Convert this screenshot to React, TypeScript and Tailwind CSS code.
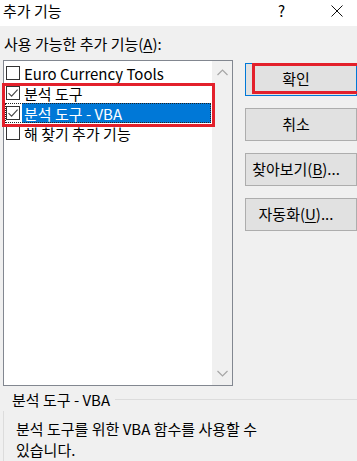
import React from "react";

const font = { fontFamily: '"Noto Sans CJK KR", "Noto Sans", sans-serif' };

function Check({ checked }: { checked: boolean }) {
  return (
    <div className="w-[14px] h-[14px] border border-[#333333] bg-white flex items-center justify-center shrink-0">
      {checked && (
        <svg width="12" height="12" viewBox="0 0 12 12">
          <path d="M1.5 6.2 L4.6 9.2 L10.6 2.6" fill="none" stroke="#444444" strokeWidth="1.1" />
        </svg>
      )}
    </div>
  );
}

function Item({ label, checked, selected }: { label: string; checked: boolean; selected?: boolean }) {
  return (
    <div className="relative h-[20px] flex items-center pl-[2px]">
      <Check checked={checked} />
      <div
        className={
          "ml-[2px] h-[20px] flex-1 flex items-center pl-[2px] text-[15px] leading-none " +
          (selected ? "bg-[#0078d7] text-white" : "text-black")
        }
      >
        {label}
      </div>
      {selected && (
        <div className="absolute left-[1px] right-0 top-0 bottom-0 border border-dotted border-[#222222] pointer-events-none" />
      )}
    </div>
  );
}

function Btn({ children, primary }: { children: React.ReactNode; primary?: boolean }) {
  return (
    <div
      className={
        "h-[33px] w-[112px] flex items-center justify-center pr-[10px] text-[15px] text-black bg-[#e1e1e1] border " +
        (primary ? "border-[#0078d7]" : "border-[#adadad]")
      }
    >
      {children}
    </div>
  );
}

export default function App() {
  return (
    <div className="relative w-[357px] h-[461px] overflow-hidden bg-[#f0f0f0] text-black" style={font}>
      {/* Title bar */}
      <div className="h-[26px] bg-white flex items-center pl-[3px] pb-[5px]">
        <span className="text-[15px] leading-none">추가 기능</span>
        <span className="ml-auto text-[15px] leading-none mr-[46px]">?</span>
        <svg width="12" height="12" viewBox="0 0 12 12" className="mr-[14px]">
          <path d="M0.5 0.5 L11.5 11.5 M11.5 0.5 L0.5 11.5" stroke="#111" strokeWidth="1" />
        </svg>
      </div>

      {/* Label */}
      <div className="h-[34px] flex items-center pl-[4px] text-[15px] leading-none">
        사용 가능한 추가 기능(<span className="underline underline-offset-2">A</span>):
      </div>

      {/* Main row */}
      <div className="flex">
        <div className="ml-[3px] w-[232px] h-[326px] border border-[#828790] bg-white flex">
          <div className="flex-1 pt-[2px] pr-[1px]">
            <Item label="Euro Currency Tools" checked={false} />
            <Item label="분석 도구" checked={true} />
            <Item label="분석 도구 - VBA" checked={true} selected />
            <Item label="해 찾기 추가 기능" checked={false} />
          </div>
          <div className="w-[20px] bg-[#f0f0f0] flex flex-col justify-between items-center py-[8px]">
            <svg width="11" height="7" viewBox="0 0 11 7">
              <path d="M0.5 6 L5.5 1 L10.5 6" fill="none" stroke="#a6a6a6" strokeWidth="1.2" />
            </svg>
            <svg width="11" height="7" viewBox="0 0 11 7">
              <path d="M0.5 1 L5.5 6 L10.5 1" fill="none" stroke="#a6a6a6" strokeWidth="1.2" />
            </svg>
          </div>
        </div>
        <div className="ml-[12px] flex flex-col gap-[12px] mt-[3px]">
          <Btn primary>확인</Btn>
          <Btn>취소</Btn>
          <Btn>
            찾아보기(<span className="underline underline-offset-2">B</span>)...
          </Btn>
          <Btn>
            자동화(<span className="underline underline-offset-2">U</span>)...
          </Btn>
        </div>
      </div>

      {/* Group box */}
      <div className="mt-[5px] flex items-center h-[16px]">
        <span className="ml-[12px] text-[15px] leading-none">분석 도구 - VBA</span>
        <div className="ml-[5px] flex-1 h-px bg-[#dcdcdc]" />
      </div>
      <div className="ml-[3px] mt-[4px] border-l border-[#dcdcdc] pl-[12px] pt-[7px] text-[15px] leading-[21px] h-[80px]">
        <div>분석 도구를 위한 VBA 함수를 사용할 수</div>
        <div>있습니다.</div>
      </div>

      {/* Red annotation rectangles */}
      <div className="absolute left-[2px] top-[83px] w-[213px] h-[44px] border-[3px] border-[#e3202b] pointer-events-none" />
      <div className="absolute left-[252px] top-[63px] w-[110px] h-[31px] border-[3px] border-[#e3202b] pointer-events-none" />
    </div>
  );
}
